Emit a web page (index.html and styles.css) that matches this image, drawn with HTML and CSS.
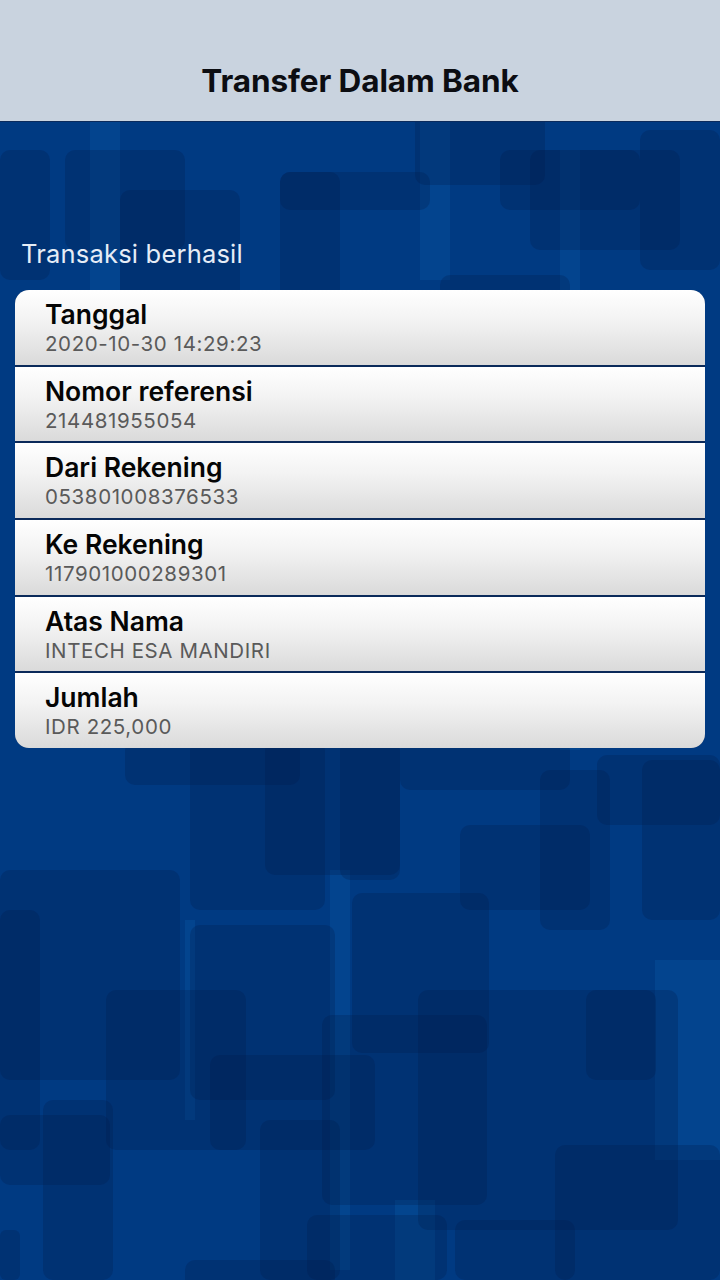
FILE: index.html
```html
<!DOCTYPE html>
<html lang="id">
<head>
<meta charset="utf-8">
<title>Transfer Dalam Bank</title>
<link rel="stylesheet" href="styles.css">
</head>
<body>
<div class="screen">
  <svg class="bg" width="720" height="1280" viewBox="0 0 720 1280" aria-hidden="true">
    <rect x="0" y="0" width="720" height="1280" fill="#003a82"/>
    <g fill="#0a5aa6" opacity="0.35">
      <rect x="90" y="60" width="30" height="300"/>
      <rect x="420" y="120" width="30" height="160"/>
      <rect x="560" y="150" width="20" height="600"/>
      <rect x="330" y="870" width="20" height="400"/>
      <rect x="655" y="960" width="65" height="200"/>
      <rect x="185" y="920" width="10" height="200"/>
      <rect x="395" y="1200" width="40" height="80"/>
    </g>
    <g fill="#001a48" fill-opacity="0.26">
      <rect x="0" y="150" width="50" height="130" rx="10"/>
      <rect x="65" y="150" width="120" height="100" rx="10"/>
      <rect x="120" y="190" width="120" height="140" rx="10"/>
      <rect x="280" y="172" width="150" height="38" rx="10"/>
      <rect x="280" y="172" width="60" height="140" rx="10"/>
      <rect x="415" y="100" width="130" height="85" rx="10"/>
      <rect x="500" y="150" width="140" height="60" rx="10"/>
      <rect x="530" y="150" width="150" height="100" rx="10"/>
      <rect x="440" y="275" width="130" height="70" rx="10"/>
      <rect x="640" y="130" width="80" height="140" rx="10"/>
      <rect x="125" y="740" width="175" height="45" rx="10"/>
      <rect x="190" y="740" width="135" height="170" rx="10"/>
      <rect x="265" y="740" width="135" height="135" rx="10"/>
      <rect x="340" y="740" width="60" height="140" rx="10"/>
      <rect x="400" y="740" width="170" height="50" rx="10"/>
      <rect x="540" y="770" width="70" height="160" rx="10"/>
      <rect x="597" y="755" width="123" height="70" rx="10"/>
      <rect x="642" y="760" width="78" height="160" rx="10"/>
      <rect x="0" y="910" width="40" height="240" rx="10"/>
      <rect x="0" y="870" width="180" height="210" rx="10"/>
      <rect x="190" y="925" width="145" height="175" rx="10"/>
      <rect x="352" y="893" width="137" height="160" rx="10"/>
      <rect x="460" y="825" width="130" height="85" rx="10"/>
      <rect x="418" y="990" width="260" height="240" rx="10"/>
      <rect x="586" y="990" width="70" height="90" rx="10"/>
      <rect x="0" y="1115" width="110" height="70" rx="10"/>
      <rect x="43" y="1100" width="70" height="180" rx="10"/>
      <rect x="210" y="1055" width="165" height="95" rx="10"/>
      <rect x="260" y="1120" width="80" height="160" rx="10"/>
      <rect x="322" y="1015" width="165" height="190" rx="10"/>
      <rect x="106" y="990" width="140" height="160" rx="10"/>
      <rect x="555" y="1145" width="165" height="135" rx="10"/>
      <rect x="307" y="1215" width="140" height="65" rx="10"/>
      <rect x="455" y="1220" width="120" height="60" rx="10"/>
      <rect x="0" y="1230" width="20" height="50" rx="6"/>
      <rect x="185" y="1260" width="150" height="40" rx="10"/>
    </g>
  </svg>

  <header class="topbar">
    <h1 class="title">Transfer Dalam Bank</h1>
  </header>

  <main class="content">
    <p class="status">Transaksi berhasil</p>
    <section class="card">
      <div class="row">
        <div class="label">Tanggal</div>
        <div class="value">2020-10-30 14:29:23</div>
      </div>
      <div class="row">
        <div class="label">Nomor referensi</div>
        <div class="value">214481955054</div>
      </div>
      <div class="row">
        <div class="label">Dari Rekening</div>
        <div class="value">053801008376533</div>
      </div>
      <div class="row">
        <div class="label">Ke Rekening</div>
        <div class="value">117901000289301</div>
      </div>
      <div class="row">
        <div class="label">Atas Nama</div>
        <div class="value">INTECH ESA MANDIRI</div>
      </div>
      <div class="row">
        <div class="label">Jumlah</div>
        <div class="value">IDR 225,000</div>
      </div>
    </section>
  </main>
</div>
</body>
</html>
```

FILE: styles.css
```css
* { box-sizing: border-box; }
html, body {
  margin: 0;
  padding: 0;
  width: 720px;
  height: 1280px;
  overflow: hidden;
  font-family: Inter, "Noto Sans", "Liberation Sans", sans-serif;
}
.screen {
  position: relative;
  width: 720px;
  height: 1280px;
  background: #003a82;
}
.bg {
  position: absolute;
  left: 0;
  top: 0;
  z-index: 0;
}
.topbar {
  position: relative;
  z-index: 1;
  height: 122px;
  background: #c9d3df;
  display: flex;
  align-items: flex-end;
  justify-content: center;
  padding-bottom: 22px;
  border-bottom: 1px solid #0b2b5c;
}
.title {
  margin: 0;
  font-size: 31.5px;
  font-weight: 700;
  color: #0c0d12;
  letter-spacing: -0.1px;
  line-height: 36px;
}
.content {
  position: relative;
  z-index: 1;
  padding: 0 15px;
}
.status {
  margin: 0;
  padding: 117px 0 0 6px;
  height: 168px;
  font-size: 25.5px;
  font-weight: 400;
  color: #e6edf6;
  line-height: 30px;
  letter-spacing: 0.2px;
}
.card {
  display: flex;
  flex-direction: column;
  gap: 2px;
  background: #0b2a5a;
  border-radius: 14px;
  overflow: hidden;
}
.row {
  height: 74.7px;
  padding: 9px 30px 0;
  background: linear-gradient(to bottom, #ffffff 0%, #f3f3f3 40%, #dadada 100%);
}
.label {
  font-size: 26.5px;
  font-weight: 600;
  color: #050505;
  line-height: 31px;
}
.value {
  font-size: 20.5px;
  font-weight: 400;
  color: #5a5a5a;
  line-height: 28px;
  letter-spacing: 0.6px;
}
```
